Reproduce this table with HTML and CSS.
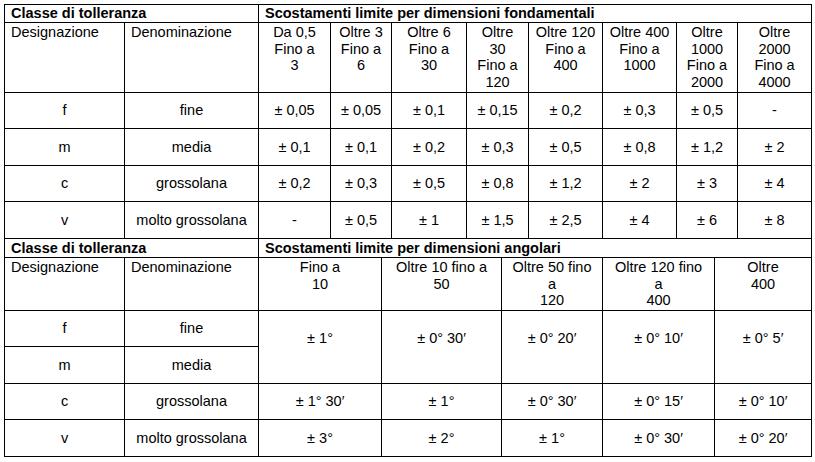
FILE: index.html
```html
<!DOCTYPE html>
<html lang="it">
<head>
<meta charset="utf-8">
<title>Classi di tolleranza</title>
<link rel="stylesheet" href="styles.css">
</head>
<body>
<div class="page">
  <table class="tol">
    <colgroup>
      <col class="w120"><col class="w134"><col class="w72"><col class="w61"><col class="w75">
      <col class="w62"><col class="w74"><col class="w74"><col class="w61"><col class="w74">
    </colgroup>
    <tr class="hd">
      <td colspan="2">Classe di tolleranza</td>
      <td colspan="8">Scostamenti limite per dimensioni fondamentali</td>
    </tr>
    <tr class="sub">
      <td class="left">Designazione</td>
      <td class="left">Denominazione</td>
      <td>Da 0,5<br>Fino a<br>3</td>
      <td>Oltre 3<br>Fino a<br>6</td>
      <td>Oltre 6<br>Fino a<br>30</td>
      <td>Oltre<br>30<br>Fino a<br>120</td>
      <td>Oltre 120<br>Fino a<br>400</td>
      <td>Oltre 400<br>Fino a<br>1000</td>
      <td>Oltre<br>1000<br>Fino a<br>2000</td>
      <td>Oltre<br>2000<br>Fino a<br>4000</td>
    </tr>
    <tr class="row">
      <td>f</td><td>fine</td>
      <td>± 0,05</td><td>± 0,05</td><td>± 0,1</td><td>± 0,15</td><td>± 0,2</td><td>± 0,3</td><td>± 0,5</td><td>-</td>
    </tr>
    <tr class="row">
      <td>m</td><td>media</td>
      <td>± 0,1</td><td>± 0,1</td><td>± 0,2</td><td>± 0,3</td><td>± 0,5</td><td>± 0,8</td><td>± 1,2</td><td>± 2</td>
    </tr>
    <tr class="row">
      <td>c</td><td>grossolana</td>
      <td>± 0,2</td><td>± 0,3</td><td>± 0,5</td><td>± 0,8</td><td>± 1,2</td><td>± 2</td><td>± 3</td><td>± 4</td>
    </tr>
    <tr class="row">
      <td>v</td><td>molto grossolana</td>
      <td>-</td><td>± 0,5</td><td>± 1</td><td>± 1,5</td><td>± 2,5</td><td>± 4</td><td>± 6</td><td>± 8</td>
    </tr>
  </table>
  <table class="tol second">
    <colgroup>
      <col class="w120"><col class="w134"><col class="w123"><col class="w120">
      <col class="w101"><col class="w112"><col class="w97">
    </colgroup>
    <tr class="hd">
      <td colspan="2">Classe di tolleranza</td>
      <td colspan="5">Scostamenti limite per dimensioni angolari</td>
    </tr>
    <tr class="sub">
      <td class="left">Designazione</td>
      <td class="left">Denominazione</td>
      <td>Fino a<br>10</td>
      <td>Oltre 10 fino a<br>50</td>
      <td>Oltre 50 fino<br>a<br>120</td>
      <td>Oltre 120 fino<br>a<br>400</td>
      <td>Oltre<br>400</td>
    </tr>
    <tr class="row">
      <td>f</td><td>fine</td>
      <td rowspan="2">± 1°<br>&nbsp;</td>
      <td rowspan="2">± 0° 30′<br>&nbsp;</td>
      <td rowspan="2">± 0° 20′<br>&nbsp;</td>
      <td rowspan="2">± 0° 10′<br>&nbsp;</td>
      <td rowspan="2">± 0° 5′<br>&nbsp;</td>
    </tr>
    <tr class="row">
      <td>m</td><td>media</td>
    </tr>
    <tr class="row">
      <td>c</td><td>grossolana</td>
      <td>± 1° 30′</td><td>± 1°</td><td>± 0° 30′</td><td>± 0° 15′</td><td>± 0° 10′</td>
    </tr>
    <tr class="row">
      <td>v</td><td>molto grossolana</td>
      <td>± 3°</td><td>± 2°</td><td>± 1°</td><td>± 0° 30′</td><td>± 0° 20′</td>
    </tr>
  </table>
</div>
</body>
</html>
```
FILE: styles.css
```css
html, body {
  margin: 0;
  padding: 0;
  background: #fff;
}

body {
  font-family: "Liberation Sans", Arial, sans-serif;
  font-size: 14.5px;
  line-height: 16.5px;
  color: #000;
}

.page {
  padding: 3.5px 0 0 4px;
}

.tol {
  border-collapse: collapse;
  table-layout: fixed;
  width: 807px;
}

.tol td {
  border: 1px solid #000;
  padding: 1px 6px;
  text-align: center;
  vertical-align: middle;
  white-space: nowrap;
}

.tol .hd td {
  font-weight: bold;
  text-align: left;
  padding: 0 6px;
}

.tol .sub td {
  vertical-align: top;
  padding-top: 1.25px;
  padding-bottom: 1.25px;
}

.tol .sub td.left {
  text-align: left;
}

.hd { height: 18.7px; }
.row { height: 36.5px; }

.second tr:first-child td {
  border-top: none;
}

.w120 { width: 120px; }
.w134 { width: 134px; }
.w72 { width: 72px; }
.w61 { width: 61px; }
.w75 { width: 75px; }
.w62 { width: 62px; }
.w74 { width: 74px; }
.w97 { width: 97px; }
.w123 { width: 123px; }
.w101 { width: 101px; }
.w112 { width: 112px; }
```
